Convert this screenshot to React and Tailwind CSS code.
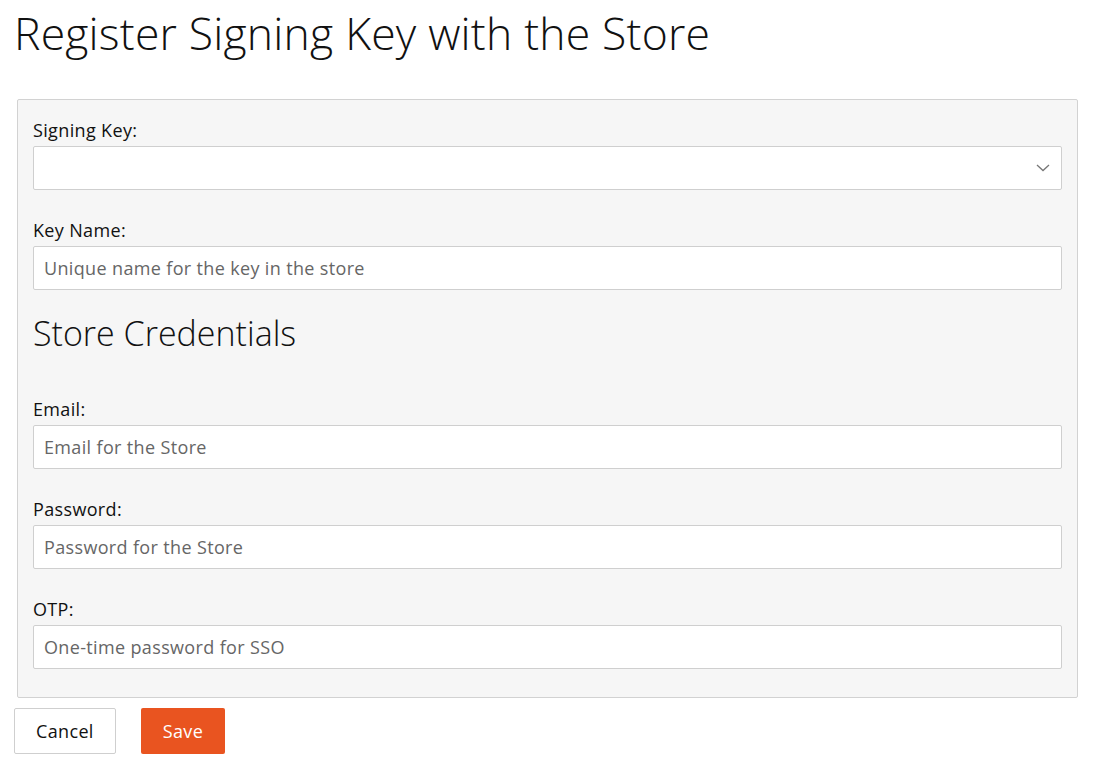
import React from 'react';

const font = { fontFamily: '"Open Sans", "Noto Sans", sans-serif' };

const labelCls = 'block h-6 text-[18px] leading-6 tracking-[0.35px] text-[#111] mb-1';
const inputCls =
    'block w-full h-[44px] bg-white border border-[#cfcfcf] rounded-[2px] px-[10px] text-[18px] tracking-[0.35px] text-[#111] placeholder:text-[#666] outline-none';

function Field({ label, placeholder, type = 'text', className = '' }) {
    return (
        <div className={className}>
            <label className={labelCls}>{label}</label>
            <input type={type} placeholder={placeholder} className={inputCls} />
        </div>
    );
}

export default function App() {
    return (
        <div className="min-h-screen bg-white px-[14px]" style={font}>
            {/* Title */}
            <h1 className="pt-[8px] h-[99px] text-[44.5px] leading-[50px] font-light text-[#111] tracking-[0.2px]">
                Register Signing Key with the Store
            </h1>

            {/* Form panel */}
            <div className="ml-[3px] w-[1061px] bg-[#f6f6f6] border border-[#d2d2d2] rounded-[2px] px-[15px] pt-[18px] pb-[28px]">
                <div className="mb-[28px]">
                    <label className={labelCls}>Signing Key:</label>
                    <div className="relative">
                        <select className="block w-full h-[44px] appearance-none bg-white border border-[#cfcfcf] rounded-[2px] px-[10px] text-[18px] outline-none">
                            <option value=""></option>
                        </select>
                        <svg className="absolute right-[12px] top-[18px] pointer-events-none" width="14" height="8" viewBox="0 0 14 8" fill="none">
                            <path d="M1 1l6 5.5L13 1" stroke="#777" strokeWidth="1.3" />
                        </svg>
                    </div>
                </div>

                <Field label="Key Name:" placeholder="Unique name for the key in the store" className="mb-[23px]" />

                <h2 className="h-[40px] text-[34px] leading-[40px] font-light text-[#111] mb-[44px]">Store Credentials</h2>

                <Field label="Email:" placeholder="Email for the Store" type="email" className="mb-[28px]" />
                <Field label="Password:" placeholder="Password for the Store" type="password" className="mb-[28px]" />
                <Field label="OTP:" placeholder="One-time password for SSO" />
            </div>

            {/* Actions */}
            <div className="flex gap-[25px] mt-[10px]">
                <button className="h-[46px] px-[21px] bg-white border border-[#cfcfcf] rounded-[2px] text-[18px] tracking-[0.35px] text-[#111]">
                    Cancel
                </button>
                <button className="h-[46px] px-[22px] bg-[#e95420] rounded-[2px] text-[18px] tracking-[0.35px] text-white">
                    Save
                </button>
            </div>
        </div>
    );
}
